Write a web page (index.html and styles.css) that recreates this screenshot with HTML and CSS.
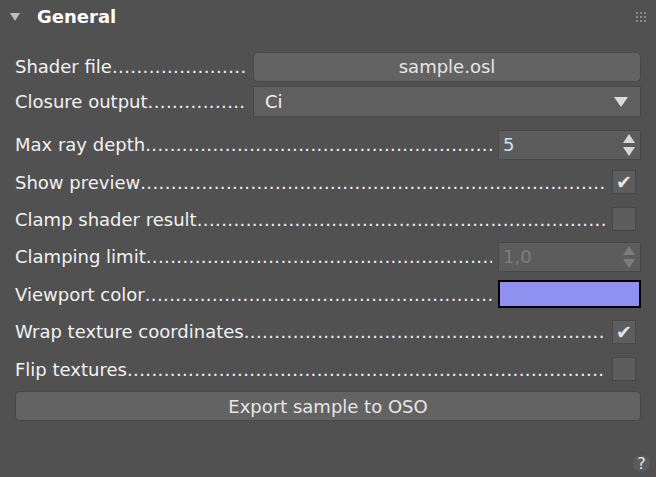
FILE: index.html
```html
<!DOCTYPE html>
<html lang="en">
<head>
  <meta charset="UTF-8" />
  <title>General</title>
  <link rel="stylesheet" href="styles.css">
</head>
<body>
  <div class="panel">
    <!-- Header -->
    <div class="header">
      <span class="caret"></span>
      <span class="title">General</span>
      <svg class="grip" width="10" height="10" viewBox="0 0 10 10">
        <g fill="#8a8a8a">
          <rect x="0" y="0" width="2" height="2"/><rect x="4" y="0" width="2" height="2"/><rect x="8" y="0" width="2" height="2"/>
          <rect x="0" y="4" width="2" height="2"/><rect x="4" y="4" width="2" height="2"/><rect x="8" y="4" width="2" height="2"/>
          <rect x="0" y="8" width="2" height="2"/><rect x="4" y="8" width="2" height="2"/><rect x="8" y="8" width="2" height="2"/>
        </g>
      </svg>
    </div>

    <!-- File + closure -->
    <div class="top-rows">
      <div class="row row-file">
        <span class="label">Shader file</span>
        <button class="btn wide">sample.osl</button>
      </div>
      <div class="row row-closure">
        <span class="label">Closure output</span>
        <div class="select wide">
          <span>Ci</span>
          <svg class="select-arrow" width="14" height="10" viewBox="0 0 14 10"><path d="M0 0 H14 L7 10 Z" fill="#dcdcdc"/></svg>
        </div>
      </div>
    </div>

    <!-- Params -->
    <div class="rows">
      <div class="row">
        <span class="label">Max ray depth</span>
        <div class="spinner">
          <span class="value">5</span>
          <svg class="spin" width="12" height="22" viewBox="0 0 12 22"><path d="M6 0 L12 9 H0 Z M0 13 H12 L6 22 Z" fill="#d8d8d8"/></svg>
        </div>
      </div>
      <div class="row">
        <span class="label">Show preview</span>
        <span class="check on">✔</span>
      </div>
      <div class="row">
        <span class="label">Clamp shader result</span>
        <span class="check"></span>
      </div>
      <div class="row">
        <span class="label">Clamping limit</span>
        <div class="spinner disabled">
          <span class="value">1,0</span>
          <svg class="spin" width="12" height="22" viewBox="0 0 12 22"><path d="M6 0 L12 9 H0 Z M0 13 H12 L6 22 Z" fill="#7c7c7c"/></svg>
        </div>
      </div>
      <div class="row">
        <span class="label">Viewport color</span>
        <div class="swatch"></div>
      </div>
      <div class="row">
        <span class="label">Wrap texture coordinates</span>
        <span class="check on">✔</span>
      </div>
      <div class="row">
        <span class="label">Flip textures</span>
        <span class="check"></span>
      </div>
      <div class="row">
        <button class="btn full">Export sample to OSO</button>
      </div>
    </div>

    <div class="footer">
      <span class="help">?</span>
    </div>
  </div>
</body>
</html>
```

FILE: styles.css
```css
html, body {
  margin: 0;
  height: 100%;
  background: #515151;
}
body {
  font-family: "DejaVu Sans", sans-serif;
  font-size: 18px;
  color: #f2f2f2;
}

.panel {
  padding: 0 15px 0 15px;
}

/* Header */
.header {
  display: flex;
  align-items: center;
  height: 33px;
  margin-left: -5px;
  margin-right: -5px;
}
.caret {
  width: 0;
  height: 0;
  border-left: 5px solid transparent;
  border-right: 5px solid transparent;
  border-top: 8px solid #bdbdbd;
  margin-right: 17px;
}
.title {
  font-weight: bold;
  font-size: 18px;
  color: #ffffff;
  flex: 1;
}

/* Rows */
.top-rows {
  display: flex;
  flex-direction: column;
  gap: 5px;
  margin-top: 19px;
}
.row-file { height: 29px; }
.row-closure { height: 31px; }

.rows {
  display: flex;
  flex-direction: column;
  margin-top: 9px;
}
.rows .row {
  height: 37.4px;
}

.row {
  display: flex;
  align-items: center;
}
.label {
  flex: 1;
  min-width: 0;
  overflow: hidden;
  white-space: nowrap;
  margin-right: 6px;
}
.label::after {
  content: "....................................................................................................................................";
  letter-spacing: 0.4px;
}

/* Controls */
.btn {
  font: inherit;
  color: #e6e6e6;
  background: #636363;
  border: 1px solid #484848;
  border-radius: 5px;
  height: 30px;
  padding: 0;
}
.wide {
  width: 388px;
  flex: none;
}
.full {
  width: 100%;
}

.select {
  display: flex;
  align-items: center;
  justify-content: space-between;
  box-sizing: border-box;
  height: 31px;
  padding: 0 12px 0 11px;
  background: #5f5f5f;
  border: 1px solid #484848;
}

.spinner {
  display: flex;
  align-items: center;
  justify-content: space-between;
  box-sizing: border-box;
  width: 143px;
  height: 30px;
  padding: 0 5px 0 4px;
  background: #5c5c5c;
  border: 1px solid #484848;
  flex: none;
}
.spinner .value {
  color: #d3e1ee;
}
.spinner.disabled .value {
  color: #7e7e7e;
}

.check {
  box-sizing: border-box;
  width: 24px;
  height: 24px;
  margin-right: 5px;
  background: #5d5d5d;
  border: 1px solid #474747;
  color: #e4e4e4;
  font-size: 19px;
  line-height: 22px;
  text-align: center;
  flex: none;
}

.swatch {
  box-sizing: border-box;
  width: 143px;
  height: 28px;
  background: #9090f0;
  border: 2px solid #000;
  flex: none;
}

/* Footer */
.footer {
  display: flex;
  justify-content: flex-end;
  margin-top: 30px;
  margin-right: -9px;
}
.help {
  width: 17px;
  height: 17px;
  border-radius: 50%;
  background: #5c5c5c;
  color: #dfe8f0;
  font-size: 16px;
  line-height: 17px;
  text-align: center;
}
```
